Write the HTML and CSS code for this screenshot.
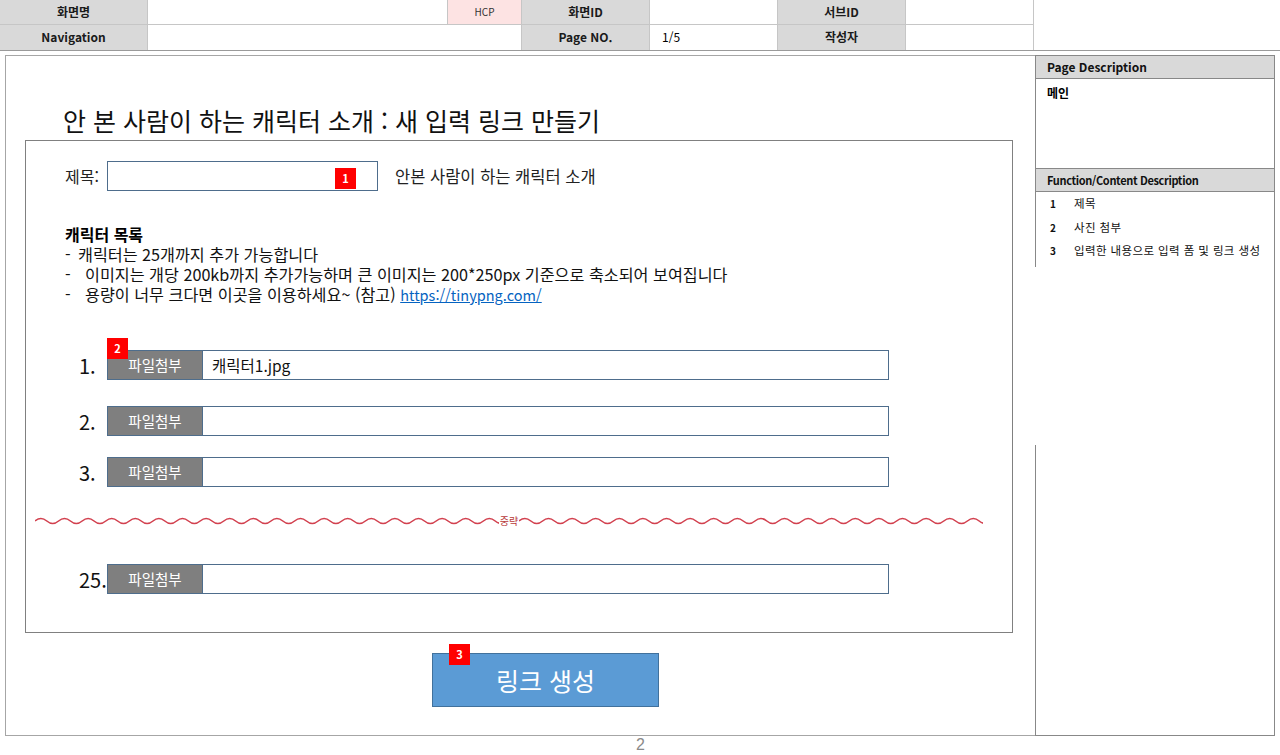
FILE: index.html
```html
<!DOCTYPE html>
<html lang="ko">
<head>
<meta charset="utf-8">
<title>안 본 사람이 하는 캐릭터 소개 : 새 입력 링크 만들기</title>
<link rel="stylesheet" href="styles.css">
</head>
<body>
<div class="sheet">
  <header class="meta">
    <div class="cell label">화면명</div>
    <div class="cell"></div>
    <div class="cell hcp">HCP</div>
    <div class="cell label">화면ID</div>
    <div class="cell"></div>
    <div class="cell label">서브ID</div>
    <div class="cell"></div>
    <div class="cell corner"></div>
    <div class="cell label last">Navigation</div>
    <div class="cell nav last"></div>
    <div class="cell label last">Page NO.</div>
    <div class="cell value last">1/5</div>
    <div class="cell label last">작성자</div>
    <div class="cell last"></div>
  </header>

  <div class="body">
    <main class="frame">
      <h1 class="title">안 본 사람이 하는 캐릭터 소개 : 새 입력 링크 만들기</h1>

      <section class="box">
        <div class="title-row">
          <span class="field-label">제목:</span>
          <div class="text-input"><span class="badge b1">1</span></div>
          <span class="title-value">안본 사람이 하는 캐릭터 소개</span>
        </div>

        <div class="notes">
          <h2 class="notes-head">캐릭터 목록</h2>
          <ul class="notes-list">
            <li><span class="dash">-</span>캐릭터는 25개까지 추가 가능합니다</li>
            <li><span class="dash wide">-</span>이미지는 개당 200kb까지 추가가능하며 큰 이미지는 200*250px 기준으로 축소되어 보여집니다</li>
            <li><span class="dash wide">-</span>용량이 너무 크다면 이곳을 이용하세요~ (참고) <a class="link" href="#">https://tinypng.com/</a></li>
          </ul>
        </div>

        <div class="files">
          <div class="file-row r1">
            <span class="num">1.</span>
            <div class="file-box">
              <span class="badge b2">2</span>
              <span class="file-btn">파일첨부</span>
              <span class="file-name">캐릭터1.jpg</span>
            </div>
          </div>
          <div class="file-row r2">
            <span class="num">2.</span>
            <div class="file-box">
              <span class="file-btn">파일첨부</span>
              <span class="file-name"></span>
            </div>
          </div>
          <div class="file-row r3">
            <span class="num">3.</span>
            <div class="file-box">
              <span class="file-btn">파일첨부</span>
              <span class="file-name"></span>
            </div>
          </div>

          <div class="omit">
            <svg class="wave" height="8"><path d="M0,4 q5.9,-5 11.8,0 t11.8,0 t11.8,0 t11.8,0 t11.8,0 t11.8,0 t11.8,0 t11.8,0 t11.8,0 t11.8,0 t11.8,0 t11.8,0 t11.8,0 t11.8,0 t11.8,0 t11.8,0 t11.8,0 t11.8,0 t11.8,0 t11.8,0 t11.8,0 t11.8,0 t11.8,0 t11.8,0 t11.8,0 t11.8,0 t11.8,0 t11.8,0 t11.8,0 t11.8,0 t11.8,0 t11.8,0 t11.8,0 t11.8,0 t11.8,0 t11.8,0 t11.8,0 t11.8,0 t11.8,0 t11.8,0 t11.8,0 t11.8,0 t11.8,0 t11.8,0"/></svg>
            <span class="omit-text">중략</span>
            <svg class="wave" height="8"><path d="M0,4 q5.9,-5 11.8,0 t11.8,0 t11.8,0 t11.8,0 t11.8,0 t11.8,0 t11.8,0 t11.8,0 t11.8,0 t11.8,0 t11.8,0 t11.8,0 t11.8,0 t11.8,0 t11.8,0 t11.8,0 t11.8,0 t11.8,0 t11.8,0 t11.8,0 t11.8,0 t11.8,0 t11.8,0 t11.8,0 t11.8,0 t11.8,0 t11.8,0 t11.8,0 t11.8,0 t11.8,0 t11.8,0 t11.8,0 t11.8,0 t11.8,0 t11.8,0 t11.8,0 t11.8,0 t11.8,0 t11.8,0 t11.8,0 t11.8,0 t11.8,0 t11.8,0 t11.8,0"/></svg>
          </div>

          <div class="file-row r25">
            <span class="num">25.</span>
            <div class="file-box">
              <span class="file-btn">파일첨부</span>
              <span class="file-name"></span>
            </div>
          </div>
        </div>
      </section>

      <div class="actions">
        <button class="create" type="button">링크 생성<span class="badge b3">3</span></button>
      </div>
    </main>

    <aside class="panel">
      <div class="panel-top">
        <div class="panel-head">Page Description</div>
        <div class="panel-desc">메인</div>
        <div class="panel-head small">Function/Content Description</div>
        <ol class="fn-list">
          <li><span class="fn-no">1</span>제목</li>
          <li><span class="fn-no">2</span>사진 첨부</li>
          <li><span class="fn-no">3</span>입력한 내용으로 입력 폼 및 링크 생성</li>
        </ol>
      </div>
      <div class="panel-gap"></div>
      <div class="panel-bottom"></div>
    </aside>
  </div>

  <footer class="page-no">2</footer>
</div>
</body>
</html>
```

FILE: styles.css
```css
* { box-sizing: border-box; }

html, body {
  margin: 0;
  padding: 0;
  background: #ffffff;
}

body {
  font-family: "Noto Sans CJK KR", "Noto Sans", sans-serif;
  color: #000;
  width: 1280px;
  height: 755px;
  overflow: hidden;
}

/* ---------- header table ---------- */
.meta {
  display: grid;
  grid-template-columns: 148px 300px 74px 128px 128px 128px 128px 246px;
  grid-template-rows: 25px 25px;
  height: 51px;
  border-bottom: 1px solid #9a9a9a;
}

.cell {
  border-right: 1px solid #c6c6c6;
  border-bottom: 1px solid #c6c6c6;
  font-size: 12px;
  line-height: 24px;
  text-align: center;
  background: #fff;
}

.cell.last { border-bottom: none; }

.cell.label {
  background: #d9d9d9;
  font-weight: 700;
  color: #1a1a1a;
}

.cell.hcp {
  background: #fde3e3;
  font-size: 10px;
  color: #333;
}

.cell.corner {
  grid-row: 1 / span 2;
  grid-column: 8;
  border-right: none;
  border-bottom: none;
}

.cell.nav { grid-column: 2 / span 2; }

.cell.value {
  text-align: left;
  padding-left: 12px;
  font-size: 12px;
}

/* ---------- body ---------- */
.body {
  display: flex;
  margin-top: 4px;
  padding-left: 5px;
  height: 681px;
}

.frame {
  width: 1030px;
  height: 681px;
  border-top: 1px solid #a6a6a6;
  border-left: 1px solid #a6a6a6;
  border-bottom: 1px solid #a6a6a6;
}

.title {
  margin: 48px 0 0 57px;
  font-size: 25px;
  line-height: 32px;
  font-weight: 400;
  color: #111;
}

.box {
  margin: 4px 0 0 19px;
  width: 988px;
  height: 493px;
  border: 1px solid #808080;
  padding: 20px 0 0 39px;
}

.title-row {
  display: flex;
  align-items: center;
  height: 30px;
}

.field-label {
  width: 42px;
  font-size: 16px;
  color: #222;
}

.text-input {
  position: relative;
  width: 271px;
  height: 30px;
  border: 1px solid #4e6d8c;
}

.title-value {
  margin-left: 17px;
  font-size: 16.5px;
  color: #222;
}

.badge {
  position: absolute;
  width: 21px;
  height: 21px;
  background: #ff0000;
  color: #fff;
  font-size: 11px;
  font-weight: 700;
  line-height: 21px;
  text-align: center;
}

.b1 { left: 227px; top: 6px; }
.b2 { left: -1px; top: -13px; }
.b3 { left: 16px; top: -10px; }

.notes { margin-top: 33px; }

.notes-head {
  margin: 0;
  font-size: 16px;
  line-height: 20px;
  font-weight: 700;
}

.notes-list {
  list-style: none;
  margin: 0;
  padding: 0;
  font-size: 16.2px;
  line-height: 20px;
  color: #111;
}

.dash {
  display: inline-block;
  width: 13px;
}

.dash.wide { width: 20px; }

.link {
  color: #0563c1;
  text-decoration: underline;
  font-size: 14.5px;
}

/* ---------- file rows ---------- */
.files {
  margin-top: 45px;
  padding-left: 14px;
}

.file-row {
  display: flex;
  align-items: center;
  height: 30px;
}

.r2 { margin-top: 26px; }
.r3 { margin-top: 21px; }
.r25 { margin-top: 39px; }

.num {
  width: 28px;
  font-size: 20px;
  color: #111;
}

.file-box {
  position: relative;
  display: flex;
  width: 782px;
  height: 30px;
  border: 1px solid #4e6d8c;
}

.file-btn {
  width: 95px;
  background: #7f7f7f;
  color: #fff;
  font-size: 14.5px;
  line-height: 28px;
  text-align: center;
  border-right: 1px solid #4e6d8c;
}

.file-name {
  flex: 1;
  padding-left: 9px;
  font-size: 15.5px;
  line-height: 28px;
  color: #111;
}

.omit {
  display: flex;
  align-items: center;
  margin: 30px 0 0 -44px;
  width: 948px;
  height: 8px;
}

.wave {
  flex: 1;
  overflow: hidden;
}

.wave path {
  fill: none;
  stroke: #d2414f;
  stroke-width: 1.6;
}

.omit-text {
  padding: 0 1px;
  font-size: 10px;
  line-height: 8px;
  color: #b83a3a;
}

/* ---------- action ---------- */
.actions {
  margin: 20px 0 0 426px;
}

.create {
  position: relative;
  width: 227px;
  height: 54px;
  background: #5b9bd5;
  border: 1px solid #41719c;
  color: #fff;
  font-family: "Noto Sans CJK KR", sans-serif;
  font-size: 25px;
  padding: 0;
  cursor: pointer;
}

/* ---------- side panel ---------- */
.panel {
  display: flex;
  flex-direction: column;
  width: 240px;
  height: 681px;
  border-top: 1px solid #888;
  border-right: 1px solid #888;
  border-bottom: 1px solid #888;
}

.panel-top {
  border-left: 1px solid #888;
}

.panel-head {
  height: 23px;
  background: #d9d9d9;
  border-bottom: 1px solid #888;
  padding-left: 11px;
  font-size: 12px;
  font-weight: 700;
  line-height: 22px;
  color: #111;
}

.panel-head.small {
  height: 24px;
  border-top: 1px solid #888;
  font-size: 11px;
  letter-spacing: -0.35px;
  line-height: 22px;
}

.panel-desc {
  height: 89px;
  padding: 6px 0 0 11px;
  font-size: 12px;
  font-weight: 700;
  line-height: 16px;
}

.fn-list {
  list-style: none;
  margin: 0;
  padding: 0 0 4px 0;
  font-size: 11.5px;
  letter-spacing: 0.4px;
  line-height: 22.5px;
  color: #111;
}

.fn-no {
  display: inline-block;
  width: 38px;
  padding-left: 14px;
  font-size: 10px;
  font-weight: 700;
  letter-spacing: 0;
}

.panel-gap { height: 178px; }

.panel-bottom {
  flex: 1;
  border-left: 1px solid #888;
}

.page-no {
  text-align: center;
  font-family: "Liberation Sans", sans-serif;
  font-size: 16px;
  line-height: 18px;
  color: #8a8a8a;
  padding-left: 1px;
}
```
